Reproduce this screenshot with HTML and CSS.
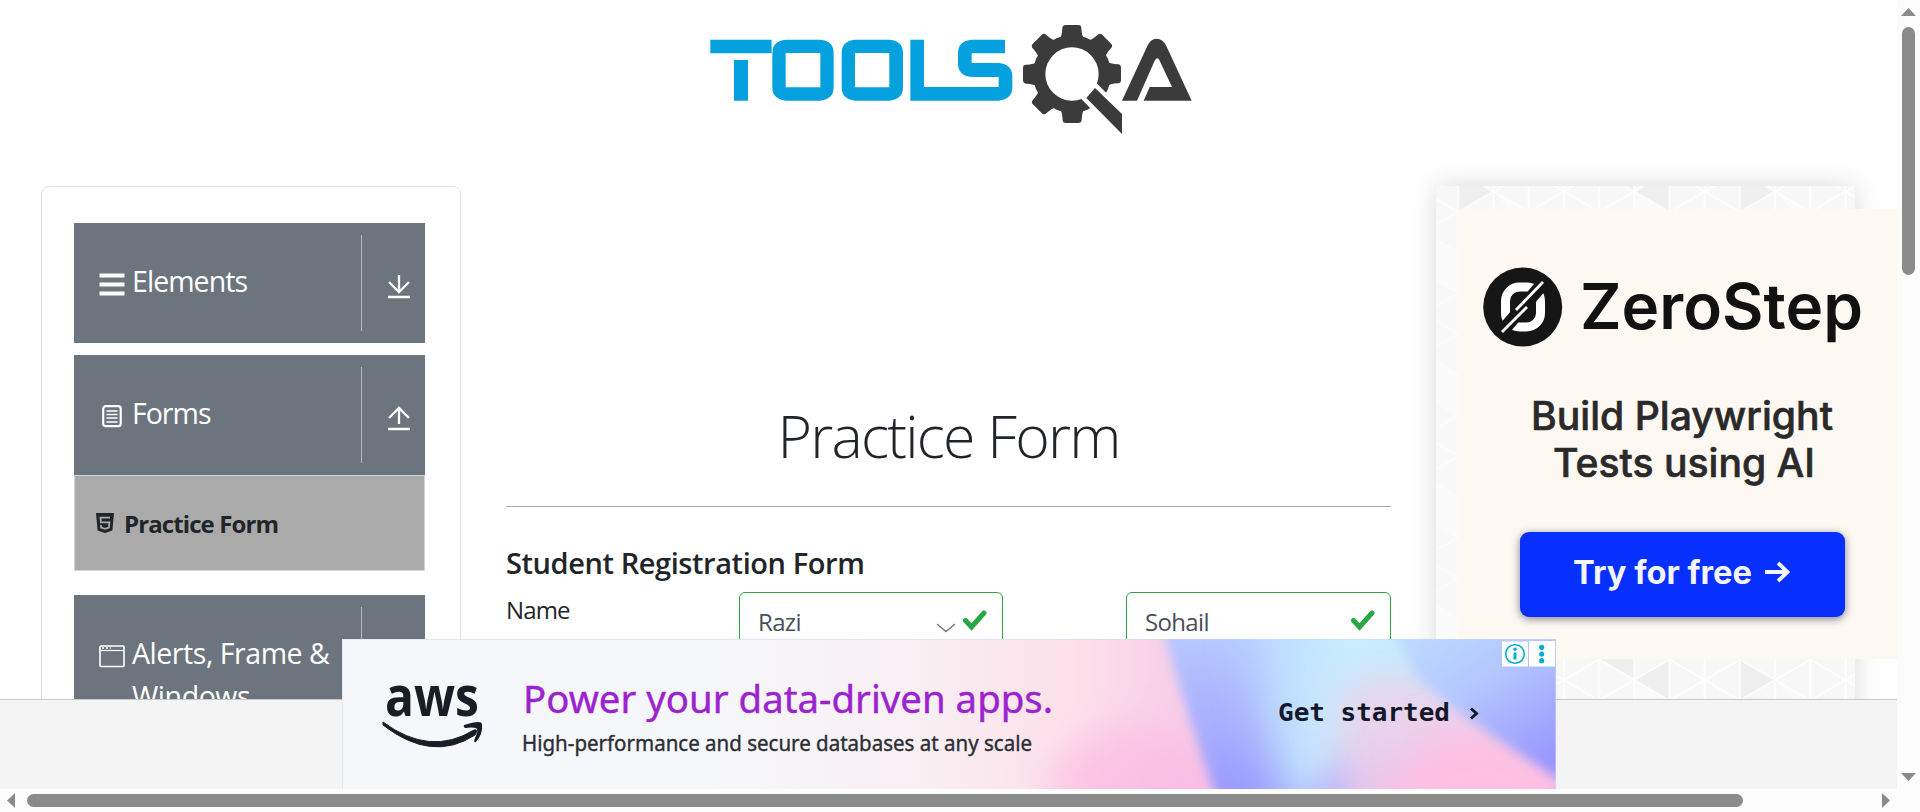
FILE: index.html
```html
<!DOCTYPE html>
<html lang="en">
<head>
<meta charset="utf-8">
<title>ToolsQA - Practice Form</title>
<link rel="stylesheet" href="styles.css">
</head>
<body>
<div class="window">
  <div class="page">
    <header class="site-header">
      <svg class="logo" viewBox="0 0 1560 420" aria-label="Tools QA">
        <g fill="#05a1de">
          <path d="M61 89H245V130H61zM132 150H174V272H132z"/>
          <path fill-rule="evenodd" d="M287 89H391Q431 92 431 130V232Q431 268 391 272H287Q247 268 247 232V130Q247 92 287 89zM287 129V232H391V129z"/>
          <path fill-rule="evenodd" d="M495 89H599Q639 92 639 130V232Q639 268 599 272H495Q455 268 455 232V130Q455 92 495 89zM495 129V232H598V129z"/>
          <path d="M661 89H702V231H926V201H845Q804 198 804 160V130Q804 92 845 89H945V130H845V159H926Q967 163 967 200V232Q967 268 926 272H661z"/>
        </g>
        <defs>
          <path id="tooth" d="M1108 90Q1116 78 1117 54Q1118 45 1127 45H1165Q1174 45 1174 54Q1175 78 1183 90z"/>
        </defs>
        <g fill="#3b3b3b">
          <circle cx="1146" cy="192" r="117"/>
          <use href="#tooth"/>
          <use href="#tooth" transform="rotate(45 1146 192)"/>
          <use href="#tooth" transform="rotate(90 1146 192)"/>
          <use href="#tooth" transform="rotate(180 1146 192)"/>
          <use href="#tooth" transform="rotate(225 1146 192)"/>
          <use href="#tooth" transform="rotate(270 1146 192)"/>
          <use href="#tooth" transform="rotate(315 1146 192)"/>
        </g>
        <path d="M1174 267L1203 297L1245 330L1300 280L1252 252L1220 220z" fill="#fff"/>
        <circle cx="1146" cy="192" r="80" fill="#fff"/>
        <path d="M1215 234L1296 312V372L1189 264zM1296 272L1372 108Q1382 86 1400 86Q1418 86 1429 108L1505 272H1361L1379 231H1446L1409 152Q1402 138 1394 152L1341 272z" fill="#3b3b3b"/>
      </svg>
    </header>

    <div class="columns">
      <aside class="sidebar">
        <div class="group">
          <div class="group-head">
            <svg class="icon" viewBox="0 0 26 26"><path d="M.5 3.500h25M.5 12.500h25M.5 21.500h25" stroke="#fff" stroke-width="4"/></svg>
            <span class="group-title t-elements">Elements</span>
            <span class="toggle"><svg viewBox="0 0 24 26"><path d="M12 1v16M2 8l10 10 10-10M1 23h22" fill="none" stroke="#fff" stroke-width="2.300"/></svg></span>
          </div>
        </div>
        <div class="group open">
          <div class="group-head">
            <svg class="icon" viewBox="0 0 26 26"><rect x="4.200" y="2.200" width="17.500" height="20" rx="2.500" fill="none" stroke="#fff" stroke-width="2.200"/><path d="M7.500 7h11M7.500 10.500h11M7.500 14h11M7.500 18h11" stroke="#fff" stroke-width="1.500"/></svg>
            <span class="group-title t-forms">Forms</span>
            <span class="toggle"><svg viewBox="0 0 24 26"><path d="M12 18V3M2 12L12 2l10 10M1 23h22" fill="none" stroke="#fff" stroke-width="2.300"/></svg></span>
          </div>
          <div class="submenu">
            <svg class="html-icon" viewBox="0 0 18 20"><path d="M0 0h18l-1.600 17.500L9 20l-7.400-2.500z" fill="#212529"/><path d="M14 4.700H4.500l.4 4.600h8.500l-.5 5.200-3.900 1.300-3.900-1.300-.2-2.500" fill="none" stroke="#aaa" stroke-width="1.800"/></svg>
            <span class="submenu-text">Practice Form</span>
          </div>
        </div>
        <div class="group">
          <div class="group-head">
            <svg class="icon" viewBox="0 0 26 26"><rect x="1" y="2" width="24" height="20.500" rx="1" fill="none" stroke="#fff" stroke-width="1.600"/><path d="M1 6.500h24" stroke="#fff" stroke-width="1.200"/><path d="M3 4h9" stroke="#fff" stroke-width="1.500" stroke-dasharray="2 2"/></svg>
            <span class="group-title t-alerts">Alerts, Frame &amp; Windows</span>
            <span class="toggle"></span>
          </div>
        </div>
      </aside>

      <main class="content">
        <h1><span>Practice Form</span></h1>
        <h5>Student Registration Form</h5>
        <div class="name-row">
          <label>Name</label>
          <div class="field first"><span class="razi">Razi</span>
            <svg class="chevron" viewBox="0 0 20 10"><path d="M1 1l9 7.500L19 1" fill="none" stroke="#777" stroke-width="1.500"/></svg>
            <svg class="check" viewBox="0 0 24 21"><path d="M2.500 10.500L8.500 17 21 3" fill="none" stroke="#28a745" stroke-width="5" stroke-linecap="round"/></svg>
          </div>
          <div class="field"><span class="sohail">Sohail</span>
            <svg class="check" viewBox="0 0 24 21"><path d="M2.500 10.500L8.500 17 21 3" fill="none" stroke="#28a745" stroke-width="5" stroke-linecap="round"/></svg>
          </div>
        </div>
      </main>

      <aside class="promo">
        <svg class="triangles" width="419" height="603" viewBox="0 0 419 603">
          <defs>
            <pattern id="tri" x="57.500" y="5.500" width="281.600" height="122.100" patternUnits="userSpaceOnUse">
              <path d="M0 0H281.600V122.100H0z" fill="#f7f7f7"/>
              <path d="M0 0L35.200 20.300V61L70.400 40.700L105.600 61V101.700L70.400 81.400zM140.800 0V40.700L176 20.300zM211.200 40.700L246.400 61V101.700L211.200 81.400z" fill="#fafafa"/>
              <path d="M246.400 20.300V-20.300L281.600 0zM246.400 142.400V101.700L281.600 122.100zM176 20.300L140.800 0L176-20.300zM176 101.700L140.800 122.100L176 142.400zM105.600 101.700L140.800 122.100V81.400z" fill="#efefef"/>
              <g fill="none" stroke="#fff" stroke-width="1.500">
                <path d="M0 0V122.100M35.200 0V122.100M70.400 0V122.100M105.600 0V122.100M140.800 0V122.100M176 0V122.100M211.200 0V122.100M246.400 0V122.100M281.600 0V122.100"/>
                <path d="M0 0L211.200 122.100M70.400 0L281.600 122.100M140.800 0L281.600 81.400M211.200 0L281.600 40.700M0 40.700L140.800 122.100M0 81.400L70.400 122.100M281.600 0L70.400 122.100M211.200 0L0 122.100M140.800 0L0 81.400M70.400 0L0 40.700M281.600 40.700L140.800 122.100M281.600 81.400L211.200 122.100"/>
              </g>
            </pattern>
          </defs>
          <rect width="419" height="603" fill="url(#tri)"/>
          <rect y="23" width="22" height="450" fill="#fafafa" opacity=".5"/>
        </svg>
        <svg class="zerostep" width="439" height="450" viewBox="1458 209 439 450">
          <rect x="1458" y="209" width="439" height="450" fill="#fdf8f1"/>
          <circle cx="1522.700" cy="307" r="39.500" fill="#161616"/>
          <rect x="1505.500" y="287" width="35" height="40" rx="14" fill="none" stroke="#fff" stroke-width="9"/>
          <path d="M1499 335L1546 280" stroke="#161616" stroke-width="13"/>
          <path d="M1502 332L1527 307M1516 310L1543 282" stroke="#fff" stroke-width="2.800"/>
          <g font-family="Inter, sans-serif">
            <text x="1580" y="329" font-size="63" font-weight="600" fill="#111" textLength="283" lengthAdjust="spacingAndGlyphs">ZeroStep</text>
            <g font-size="39" font-weight="500" fill="#2a2a2a" stroke="#2a2a2a" stroke-width=".6">
              <text x="1531" y="430" textLength="302" lengthAdjust="spacingAndGlyphs">Build Playwright</text>
              <text x="1553" y="476.500" textLength="262" lengthAdjust="spacingAndGlyphs">Tests using AI</text>
            </g>
            <rect class="cta-shape" x="1520" y="532" width="325" height="85" rx="9" fill="#0730ff"/>
            <text x="1573" y="583.500" font-size="32" font-weight="700" fill="#f2f5ff" textLength="179" lengthAdjust="spacingAndGlyphs">Try for free</text>
          </g>
          <path d="M1765 572H1787M1778 563L1787.500 572L1778 581" fill="none" stroke="#f2f5ff" stroke-width="3.800"/>
        </svg>
      </aside>
    </div>

    <footer class="site-footer"></footer>

    <div class="banner">
      <svg width="1214" height="150" viewBox="0 0 1214 150">
        <defs>
          <linearGradient id="base" x2="1"><stop offset=".3" stop-color="#f6f7fa"/><stop offset=".48" stop-color="#f8eff3"/><stop offset=".6" stop-color="#fde0ea"/><stop offset=".69" stop-color="#f8cee8"/></linearGradient>
          <linearGradient id="peri" x2="0" y2="1"><stop offset="0" stop-color="#b8cdff"/><stop offset="1" stop-color="#9a96ff"/></linearGradient>
          <linearGradient id="sky" x2="1"><stop offset="0" stop-color="#b9d2ff"/><stop offset=".3" stop-color="#c7effe"/><stop offset="1" stop-color="#c8dcfa"/></linearGradient>
          <linearGradient id="corner" x2=".7" y2="1"><stop offset="0" stop-color="#bfe2ff"/><stop offset=".5" stop-color="#b3c6ff"/><stop offset="1" stop-color="#9894ff"/></linearGradient>
          <filter id="soft"><feGaussianBlur stdDeviation="6"/></filter>
          <filter id="wide" x="-.5" y="-.5" width="2" height="2"><feGaussianBlur stdDeviation="20"/></filter>
        </defs>
        <rect width="1214" height="150" fill="url(#base)"/>
        <ellipse cx="800" cy="150" rx="95" ry="60" fill="#fbb4e0" opacity=".6" filter="url(#wide)"/>
        <path d="M818-20Q840 60 878 170H1240V-20z" fill="url(#peri)" filter="url(#soft)"/>
        <path d="M900-60L1240-60V110L1000 120L955 190L920 80z" fill="url(#sky)" filter="url(#wide)"/>
        <path d="M1000 40H1130L1240 140V190H990z" fill="#f0cfe9" opacity=".85" filter="url(#wide)"/>
        <path d="M1075 105L1150 85L1240 130V190H1020z" fill="#ffc0e1" filter="url(#wide)"/>
        <path d="M1045-20L1075 38Q1120 80 1230 148V-20z" fill="url(#corner)" filter="url(#soft)"/>
        <path d="M.5 150V.5H1213.500V150" fill="none" stroke="#c9d8ff" stroke-opacity=".5"/>
        <g font-family="'Noto Sans', sans-serif">
          <text x="43" y="77" font-family="'Open Sans', sans-serif" font-size="55" font-weight="700" fill="#181e26" textLength="94" lengthAdjust="spacingAndGlyphs">aws</text>
          <text x="181" y="74" font-size="39" fill="#9d22cf" stroke="#9d22cf" stroke-width=".4" textLength="530" lengthAdjust="spacingAndGlyphs">Power your data-driven apps.</text>
          <text x="180" y="111.500" font-size="22" fill="#2c2e36" stroke="#2c2e36" stroke-width=".4" textLength="510" lengthAdjust="spacingAndGlyphs">High-performance and secure databases at any scale</text>
        </g>
        <path d="M41 83Q88 118 132 91Q137 90 133 96Q90 124 41 86z" fill="#181e26" stroke="#181e26"/>
        <path d="M122 86Q141 80 140 86Q141 95 134 103Q131 104 133 99Q137 91 134 89Q130 88 123 89Q121 88 122 86z" fill="#181e26"/>
        <g font-family="'DejaVu Sans Mono', monospace" font-weight="700" font-size="25" fill="#14182b">
          <text x="936" y="81.500" textLength="172" lengthAdjust="spacingAndGlyphs">Get started</text>
          <path d="M1129 69.500L1134.500 74.500L1129 79.500" fill="none" stroke="#14182b" stroke-width="3"/>
        </g>
        <path d="M1160 2.500h26v25h-26zM1187 2h26v25.500h-26z" fill="#fff"/>
        <circle cx="1173" cy="15" r="9.300" fill="none" stroke="#00aecd" stroke-width="1.600"/>
        <path d="M1171.500 13.500h3v7h-3z" fill="#00aecd"/><circle cx="1173" cy="10.300" r="1.800" fill="#00aecd"/>
        <g fill="#00aecd"><circle cx="1199.700" cy="8.300" r="2.600"/><circle cx="1199.700" cy="15" r="2.600"/><circle cx="1199.700" cy="21.700" r="2.600"/></g>
      </svg>
    </div>
  </div>

  <div class="scroll-v">
    <svg width="15" height="8" viewBox="0 0 15 8"><path d="M0 8L7.500 0 15 8z" fill="#8b8b8b"/></svg>
    <span class="thumb-v"></span>
    <svg class="down" width="15" height="8" viewBox="0 0 15 8"><path d="M0 0L7.500 8 15 0z" fill="#8b8b8b"/></svg>
  </div>
  <div class="scroll-h">
    <svg width="8" height="15" viewBox="0 0 8 15"><path d="M8 0L0 7.500 8 15z" fill="#8b8b8b"/></svg>
    <span class="thumb-h"></span>
    <svg class="right" width="8" height="15" viewBox="0 0 8 15"><path d="M0 0L8 7.500 0 15z" fill="#8b8b8b"/></svg>
  </div>
</div>
</body>
</html>
```
FILE: styles.css
```css
* { box-sizing: border-box; }
body {
  margin: 0;
  overflow: hidden;
  background: #fff;
  color: #212529;
  font-family: "Open Sans", "Noto Sans", sans-serif;
}
svg { display: block; flex: none; }
.window {
  display: grid;
  grid-template-columns: 1897px 23px;
  grid-template-rows: 789px 23px;
  width: 1920px;
  height: 812px;
  overflow: hidden;
  background: #fcfcfc;
}
.page {
  position: relative;
  overflow: hidden;
  background: #fff;
}
.site-header { height: 186px; padding: 10px 0 0 690px; }
.logo { width: 520px; height: 140px; }
.columns { display: flex; align-items: flex-start; padding-left: 41px; }

.sidebar {
  flex: none;
  width: 420px;
  height: 700px;
  padding: 36px 35px 0 32px;
  border: 1px solid #dfdfdf;
  border-radius: 8px;
}
.group { margin-bottom: 12px; }
.group.open { margin-bottom: 24px; }
.group-head {
  display: flex;
  align-items: flex-start;
  height: 120px;
  padding: 12px 11px 12px 25px;
  background: #6c757d;
  color: #fff;
}
.icon { width: 26px; height: 26px; margin-top: 37px; }
.group-title {
  width: 227px;
  margin-top: 25px;
  padding-left: 7px;
  font-size: 28.5px;
  line-height: 43px;
  white-space: normal;
}
.t-elements { letter-spacing: -.95px; }
.t-forms { letter-spacing: -1px; }
.t-alerts { letter-spacing: -.45px; }
.toggle {
  display: flex;
  flex: 1;
  justify-content: flex-end;
  height: 96px;
  padding: 39px 3px 0 0;
  border-left: 1px solid #b3b7bb;
  margin-left: 9px;
}
.toggle svg { width: 24px; height: 26px; }
.submenu {
  display: flex;
  align-items: center;
  height: 96px;
  padding-left: 21px;
  background: #aaa;
  border: 1px solid #ced4da;
  gap: 10px;
}
.html-icon { width: 18px; height: 20px; margin-top: -1px; }
.submenu-text { font-size: 24px; font-weight: 700; letter-spacing: -.9px; }

.content { flex: none; width: 885px; margin-left: 45px; padding-top: 205px; }
h1 {
  height: 116px;
  margin: 0 0 37px;
  border-bottom: 1px solid #a9a9a9;
  font-size: 59px;
  font-weight: 300;
  line-height: 88px;
  text-align: center;
  letter-spacing: -1.75px;
}
h5 {
  margin: 0;
  font-size: 29px;
  font-weight: 600;
  line-height: 38px;
  letter-spacing: -.42px;
}
.name-row { display: flex; margin-top: 10px; font-size: 24px; }
label { width: 233px; line-height: 36px; letter-spacing: -.85px; }
.field {
  display: flex;
  width: 265px;
  height: 60px;
  padding: 0 15px 0 18px;
  border: 1px solid #28a745;
  border-radius: 6px;
  color: #495057;
  line-height: 58px;
}
.field.first { width: 264px; margin-right: 123px; }
.razi, .sohail { flex: 1; letter-spacing: -.65px; }
.chevron { width: 20px; height: 10px; margin: 30px 7px 0 0; }
.check { width: 24px; height: 21px; margin-top: 17px; }

.promo {
  display: grid;
  flex: none;
  width: 419px;
  height: 603px;
  margin-left: 45px;
  box-shadow: 0 0 25px rgba(0, 0, 0, .15);
}
.triangles, .zerostep { grid-area: 1 / 1; }
.zerostep { margin: 23px 0 0 22px; }
.cta-shape { filter: drop-shadow(0 2px 4px rgba(50, 50, 80, .6)); }

.site-footer {
  position: absolute;
  top: 699px;
  left: 0;
  width: 100%;
  height: 90px;
  border-top: 1px solid #c8c8c8;
  background: #f4f4f4;
}
.banner { position: absolute; top: 639px; left: 342px; }

.scroll-v {
  display: flex;
  flex-direction: column;
  align-items: center;
  padding: 8px 0;
  background: #fcfcfc;
}
.thumb-v { width: 13px; height: 248px; margin-top: 11px; border-radius: 7px; background: #8b8b8b; }
.down { margin-top: auto; }
.scroll-h {
  display: flex;
  align-items: center;
  grid-column: 1 / -1;
  padding: 0 30px 0 7px;
}
.thumb-h { width: 1716px; height: 13px; margin-left: 12px; border-radius: 7px; background: #8b8b8b; }
.right { margin-left: auto; }
```
